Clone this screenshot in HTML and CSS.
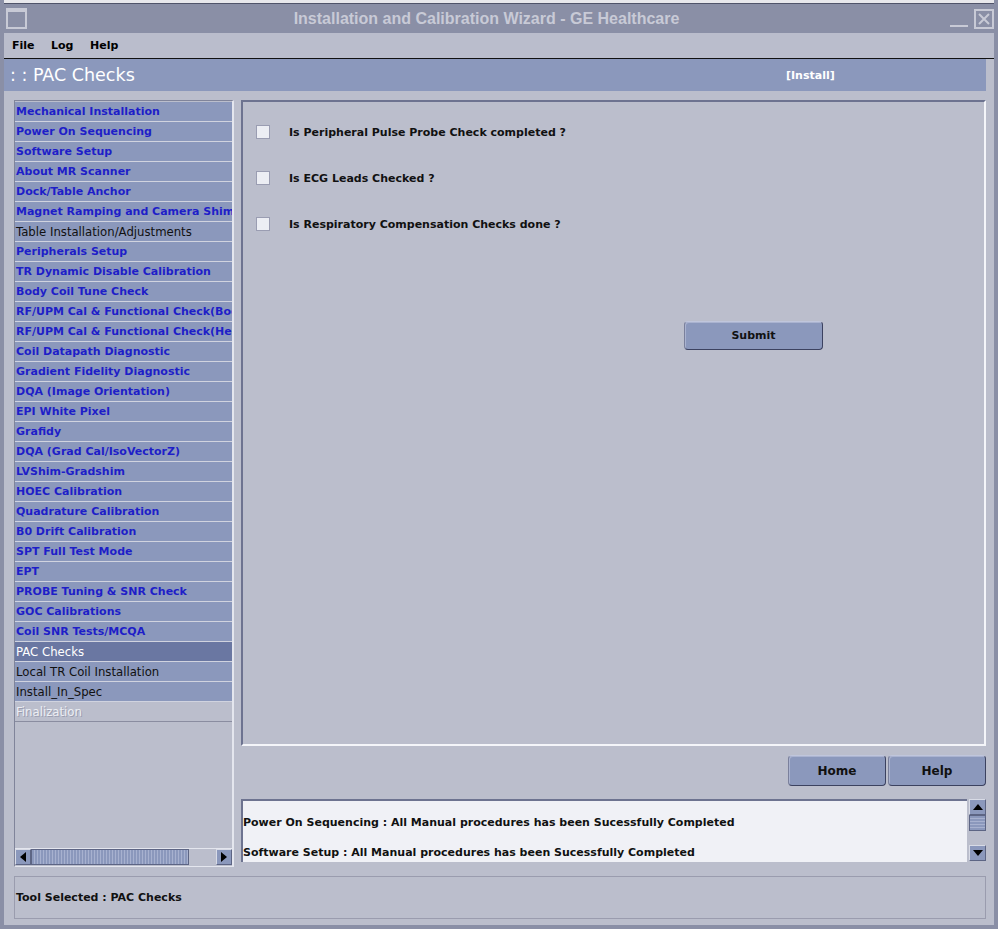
FILE: index.html
```html
<!DOCTYPE html>
<html lang="en">
<head>
    <meta charset="UTF-8">
    <title>Installation and Calibration Wizard - GE Healthcare</title>
    <link rel="stylesheet" href="styles.css">
</head>
<body>
    <div class="window">
        <div class="top-strip"></div>
        <div class="titlebar">
            <span class="win-icon"></span>
            <span class="title">Installation and Calibration Wizard - GE Healthcare</span>
            <span class="win-min"></span>
            <span class="win-close">
                <svg width="20" height="20" viewBox="0 0 20 20">
                    <rect x="1" y="1" width="18" height="18" fill="none" stroke="#c8cad6" stroke-width="2"/>
                    <path d="M5 5 L15 15 M15 5 L5 15" stroke="#c8cad6" stroke-width="2"/>
                </svg>
            </span>
        </div>
        <div class="menubar">
            <span class="menu-file">File</span>
            <span class="menu-log">Log</span>
            <span>Help</span>
        </div>
        <div class="header">
            <span class="header-title">: : PAC Checks</span>
            <span class="header-mode">[Install]</span>
        </div>

        <div class="body">
            <div class="columns">
                <div class="left-col">
                    <div class="nav">
                        <div class="nav-item link">Mechanical Installation</div>
                        <div class="nav-item link">Power On Sequencing</div>
                        <div class="nav-item link">Software Setup</div>
                        <div class="nav-item link">About MR Scanner</div>
                        <div class="nav-item link">Dock/Table Anchor</div>
                        <div class="nav-item link">Magnet Ramping and Camera Shim</div>
                        <div class="nav-item">Table Installation/Adjustments</div>
                        <div class="nav-item link">Peripherals Setup</div>
                        <div class="nav-item link">TR Dynamic Disable Calibration</div>
                        <div class="nav-item link">Body Coil Tune Check</div>
                        <div class="nav-item link">RF/UPM Cal &amp; Functional Check(Body)</div>
                        <div class="nav-item link">RF/UPM Cal &amp; Functional Check(Head)</div>
                        <div class="nav-item link">Coil Datapath Diagnostic</div>
                        <div class="nav-item link">Gradient Fidelity Diagnostic</div>
                        <div class="nav-item link">DQA (Image Orientation)</div>
                        <div class="nav-item link">EPI White Pixel</div>
                        <div class="nav-item link">Grafidy</div>
                        <div class="nav-item link">DQA (Grad Cal/IsoVectorZ)</div>
                        <div class="nav-item link">LVShim-Gradshim</div>
                        <div class="nav-item link">HOEC Calibration</div>
                        <div class="nav-item link">Quadrature Calibration</div>
                        <div class="nav-item link">B0 Drift Calibration</div>
                        <div class="nav-item link">SPT Full Test Mode</div>
                        <div class="nav-item link">EPT</div>
                        <div class="nav-item link">PROBE Tuning &amp; SNR Check</div>
                        <div class="nav-item link">GOC Calibrations</div>
                        <div class="nav-item link">Coil SNR Tests/MCQA</div>
                        <div class="nav-item selected">PAC Checks</div>
                        <div class="nav-item">Local TR Coil Installation</div>
                        <div class="nav-item">Install_In_Spec</div>
                        <div class="nav-item disabled">Finalization</div>
                    </div>
                    <div class="hscroll">
                        <span class="arrow-btn"><span class="tri-left"></span></span>
                        <span class="hthumb"></span>
                        <span class="htrack"></span>
                        <span class="arrow-btn"><span class="tri-right"></span></span>
                    </div>
                </div>

                <div class="right-col">
                    <div class="content">
                        <div class="checks">
                            <label class="check-row"><span class="box"></span>Is Peripheral Pulse Probe Check completed ?</label>
                            <label class="check-row"><span class="box"></span>Is ECG Leads Checked ?</label>
                            <label class="check-row"><span class="box"></span>Is Respiratory Compensation Checks done ?</label>
                        </div>
                        <div class="submit-row">
                            <button class="btn submit">Submit</button>
                        </div>
                    </div>
                    <div class="nav-buttons">
                        <button class="btn big">Home</button>
                        <button class="btn big">Help</button>
                    </div>
                    <div class="log-wrap">
                        <div class="log">
                            <p>Power On Sequencing : All Manual procedures has been Sucessfully Completed</p>
                            <p>Software Setup : All Manual procedures has been Sucessfully Completed</p>
                        </div>
                        <div class="vscroll">
                            <span class="arrow-btn"><span class="tri-up"></span></span>
                            <span class="vthumb"></span>
                            <span class="vtrack"></span>
                            <span class="arrow-btn"><span class="tri-down"></span></span>
                        </div>
                    </div>
                </div>
            </div>

            <div class="status">Tool Selected : PAC Checks</div>
        </div>
    </div>
</body>
</html>
```

FILE: styles.css
```css
body {
    margin: 0;
    font-family: "DejaVu Sans", sans-serif;
    background-color: #bbbecc;
}

.window {
    width: 998px;
    height: 929px;
    box-sizing: border-box;
    background-color: #bbbecc;
    border-left: 4px solid #8a8fa6;
    border-right: 4px solid #8a8fa6;
    border-bottom: 4px solid #8a8fa6;
    overflow: hidden;
}

.top-strip {
    height: 3px;
    margin: 0 -4px;
    background-color: #e8e8ec;
    border-bottom: 1px solid #50546a;
}

.titlebar {
    height: 29px;
    background-color: #8a8fa6;
    display: flex;
    align-items: center;
}

.win-icon {
    width: 17px;
    height: 15px;
    margin-left: 2px;
    border: 2px solid #c8cad6;
    border-top-width: 4px;
    box-sizing: content-box;
}

.title {
    flex: 1;
    text-align: center;
    font-family: "Liberation Sans", Arial, sans-serif;
    font-weight: bold;
    font-size: 16px;
    color: #c8cad6;
    padding-right: 4px;
}

.win-min {
    width: 18px;
    height: 17px;
    border-bottom: 2px solid #c8cad6;
    margin-right: 6px;
    box-sizing: border-box;
}

.win-close {
    display: flex;
}

.menubar {
    height: 25px;
    background-color: #babdcc;
    border-bottom: 1px solid #111;
    display: flex;
    align-items: center;
    padding-left: 8px;
    font-size: 11px;
    font-weight: bold;
}

.menu-file {
    width: 39px;
}

.menu-log {
    width: 39px;
}

.header {
    height: 32px;
    margin-right: 8px;
    background-color: #8b98bc;
    color: #fff;
    display: flex;
    align-items: center;
    position: relative;
}

.header-title {
    font-size: 17.5px;
    padding-left: 6px;
}

.header-mode {
    position: absolute;
    left: 782px;
    font-size: 11px;
    font-weight: bold;
}

.body {
    padding: 9px 8px 0 10px;
}

.columns {
    display: flex;
    gap: 7px;
}

.left-col {
    width: 220px;
    height: 767px;
    box-sizing: border-box;
    border-left: 1px solid #80849a;
    border-top: 1px solid #80849a;
    border-right: 2px solid #e4e6ee;
    border-bottom: 1px solid #e4e6ee;
    display: flex;
    flex-direction: column;
}

.nav {
    flex: 1;
    overflow: hidden;
    padding-top: 1px;
    border-bottom: 1px solid #e4e6ee;
}

.nav-item {
    height: 19px;
    line-height: 20px;
    border-bottom: 1px solid #d0d3df;
    background-color: #8b98bc;
    padding-left: 1px;
    font-size: 11.7px;
    color: #111;
    white-space: nowrap;
    overflow: hidden;
}

.nav-item.link {
    color: #1e1ec8;
    font-weight: bold;
    font-size: 11px;
}

.nav-item.selected {
    background-color: #6a77a2;
    color: #fff;
}

.nav-item.disabled {
    background-color: #bbbecc;
    color: #eceef4;
    text-shadow: 1px 1px 0 #9a9db0;
    border-bottom: 1px solid #8a8da0;
}

.hscroll {
    height: 17px;
    display: flex;
    background-color: #bbbecc;
}

.arrow-btn {
    width: 16px;
    height: 16px;
    box-sizing: border-box;
    background-color: #8b98bc;
    border: 1px solid #5d6584;
    border-top-color: #d8dbe6;
    border-left-color: #d8dbe6;
    display: flex;
    align-items: center;
    justify-content: center;
}

.tri-left, .tri-right, .tri-up, .tri-down {
    width: 0;
    height: 0;
    border: 5px solid transparent;
}

.tri-left {
    border-right: 6px solid #000;
    border-left: 0;
}

.tri-right {
    border-left: 6px solid #000;
    border-right: 0;
}

.tri-up {
    border-bottom: 6px solid #000;
    border-top: 0;
}

.tri-down {
    border-top: 6px solid #000;
    border-bottom: 0;
}

.hthumb {
    width: 158px;
    height: 16px;
    box-sizing: border-box;
    border: 1px solid #5d6584;
    background: repeating-linear-gradient(90deg, #8b98bc 0 2px, #a7b1cf 2px 3px);
}

.htrack {
    flex: 1;
}

.right-col {
    flex: 1;
    display: flex;
    flex-direction: column;
}

.content {
    height: 646px;
    box-sizing: border-box;
    border-top: 2px solid #6d7390;
    border-left: 2px solid #6d7390;
    border-right: 2px solid #f4f5f9;
    border-bottom: 2px solid #f4f5f9;
}

.checks {
    padding: 22px 0 0 13px;
    display: flex;
    flex-direction: column;
    gap: 30px;
}

.check-row {
    display: flex;
    align-items: center;
    height: 16px;
    font-size: 11px;
    font-weight: bold;
    color: #111;
}

.box {
    width: 14px;
    height: 14px;
    box-sizing: border-box;
    background-color: #eceef4;
    border: 1px solid #9a9db2;
    margin-right: 19px;
}

.submit-row {
    padding: 89px 0 0 441px;
}

.btn {
    font-family: "DejaVu Sans", sans-serif;
    font-weight: bold;
    color: #111;
    background-color: #8b98bc;
    border: 1px solid #3c4260;
    border-top-color: #c0c6dc;
    border-left-color: #7a809c;
    border-radius: 4px;
    box-shadow: inset 1px 1px 0 #aab3d0;
}

.btn.submit {
    width: 139px;
    height: 29px;
    font-size: 11px;
}

.nav-buttons {
    display: flex;
    justify-content: flex-end;
    gap: 2px;
    margin-top: 9px;
}

.btn.big {
    width: 98px;
    height: 31px;
    font-size: 12px;
}

.log-wrap {
    margin-top: 13px;
    display: flex;
    gap: 2px;
}

.log {
    flex: 1;
    height: 63px;
    box-sizing: border-box;
    overflow: hidden;
    background-color: #f0f1f6;
    border-top: 2px solid #6d7390;
    border-left: 2px solid #6d7390;
    padding: 15px 0 0 0;
    font-size: 11px;
    font-weight: bold;
    color: #111;
}

.log p {
    margin: 0 0 17px 0;
    line-height: 13px;
    white-space: nowrap;
}

.vscroll {
    width: 17px;
    height: 62px;
    display: flex;
    flex-direction: column;
}

.vscroll .arrow-btn {
    width: 17px;
}

.vthumb {
    height: 16px;
    box-sizing: border-box;
    border: 1px solid #5d6584;
    background: repeating-linear-gradient(180deg, #8b98bc 0 2px, #a7b1cf 2px 3px);
}

.vtrack {
    flex: 1;
    background-color: #bbbecc;
}

.status {
    margin-top: 9px;
    height: 43px;
    box-sizing: border-box;
    border: 1px solid #9a9cae;
    display: flex;
    align-items: center;
    padding-left: 1px;
    font-size: 11px;
    font-weight: bold;
    color: #111;
}
```
